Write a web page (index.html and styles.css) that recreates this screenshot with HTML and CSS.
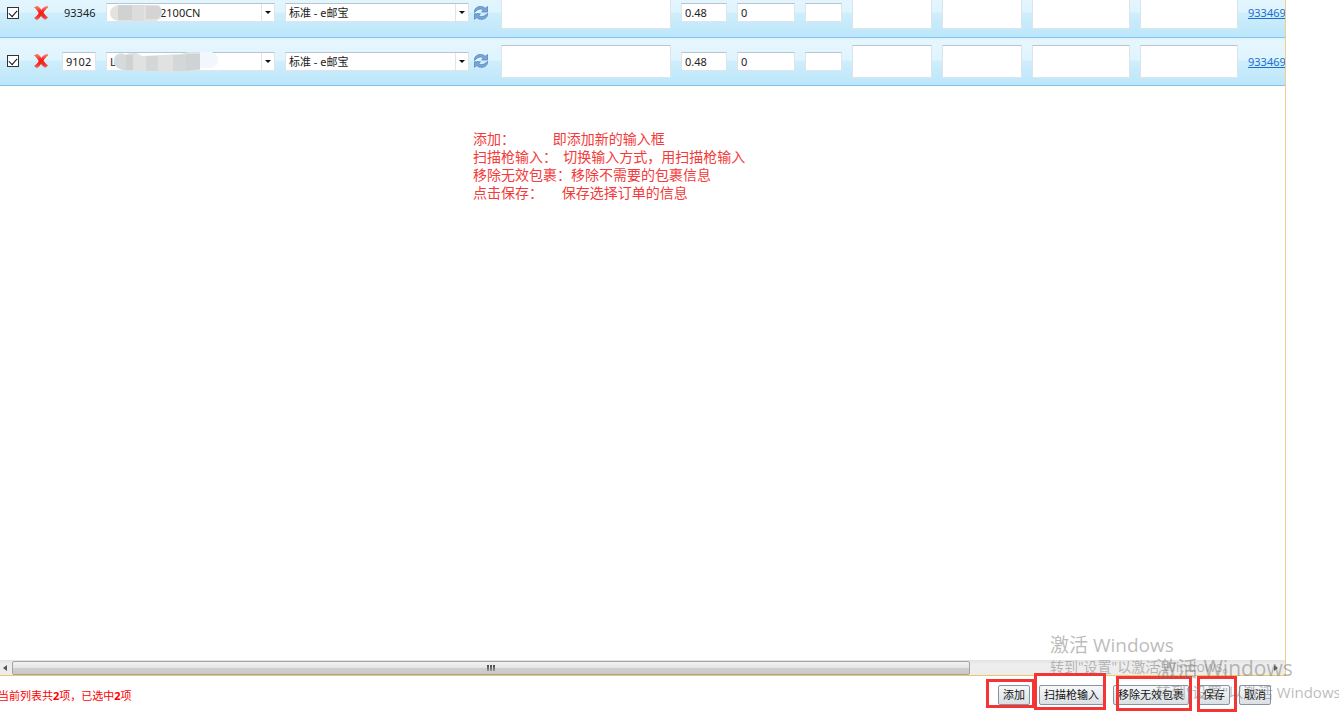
FILE: index.html
```html
<!DOCTYPE html>
<html lang="zh-CN">
<head>
<meta charset="utf-8">
<title>包裹信息</title>
<link rel="stylesheet" href="styles.css">
</head>
<body>
<svg class="defs" aria-hidden="true">
  <defs>
    <linearGradient id="red" x1="0" y1="0" x2="0" y2="1">
      <stop offset="0" stop-color="#f98a78"/><stop offset=".45" stop-color="#f51c14"/><stop offset=".75" stop-color="#f3302a"/><stop offset="1" stop-color="#ee7a74"/>
    </linearGradient>
    <symbol id="cross" viewBox="0 0 16 16">
      <path fill="url(#red)" d="M1 2.200 4.400.8C5.800 1.500 7.200 3.200 8.300 4.800 9.800 3 11.600 1.500 14.200.8L15.200 2.400C13 3.800 11.600 5.600 10.500 7.700 11.800 9.600 13.200 11 15 12.600L12.200 15C10.600 14 9.200 12.500 8 11 6.900 12.800 5.600 14.300 3.800 15.200L1 13C3.200 11.800 4.700 10 5.700 8 4.600 5.900 3 3.800 1 2.200Z"/>
    </symbol>
    <symbol id="refresh" viewBox="0 0 16 16">
      <path fill="#7ba7d8" stroke="#4a7ab8" stroke-width=".7" stroke-linejoin="round" d="M1.400 7.500C1.200 3.800 3.800 1.600 7.200 1.500 9.200 1.500 11 2 12.200 3.300L14.500 1.500V7H8.500L10.300 5.200C9.500 4.400 8.400 4 7.400 4.100 5.200 4.200 3.700 5.400 1.400 7.500Z"/>
      <path fill="#7ba7d8" stroke="#4a7ab8" stroke-width=".7" stroke-linejoin="round" d="M14.600 8.300C14.800 12 12.200 14.200 8.800 14.300 6.800 14.300 5 13.800 3.800 12.500L1.500 14.300V8.800H7.500L5.700 10.600C6.500 11.400 7.600 11.800 8.600 11.700 10.800 11.600 12.300 10.400 14.600 8.300Z"/>
    </symbol>
  </defs>
</svg>
<div class="page">
  <main class="panel">
    <div class="viewport">
      <table class="grid">
        <colgroup>
          <col class="c-check"><col class="c-del"><col class="c-id"><col class="c-track"><col class="c-ship"><col class="c-note"><col class="c-weight"><col class="c-price"><col class="c-qty"><col class="c-size"><col class="c-size"><col class="c-memo"><col class="c-memo"><col class="c-order">
        </colgroup>
        <tbody>
          <tr>
            <td><input class="check" type="checkbox" aria-label="选择" checked></td>
            <td><button class="icon" type="button" aria-label="删除"><svg viewBox="0 0 16 16"><use href="#cross"/></svg></button></td>
            <td><span class="id">93346</span></td>
            <td>
              <span class="combo">
                <select class="masked" aria-label="跟踪号"><option>2100CN</option></select>
                <svg class="mask" viewBox="0 0 120 24" aria-hidden="true">
                  <path fill="#e3e2df" d="M12 4H52Q56 6 56 12T50 20H12Q4 18 4 12T12 4Z"/>
                  <path fill="#cfd2d3" d="M12 4H26V19H12Z"/><path fill="#dcdcdc" d="M26 4H38V20H26Z"/><path fill="#d3d4d3" d="M40 5H52Q56 7 55 12T50 18H40Z"/>
                </svg>
              </span>
            </td>
            <td>
              <div class="ship">
                <span class="combo"><select aria-label="运输方式"><option>标准 - e邮宝</option></select></span>
                <button class="icon" type="button" aria-label="刷新"><svg viewBox="0 0 16 16"><use href="#refresh"/></svg></button>
              </div>
            </td>
            <td><textarea aria-label="备注"></textarea></td>
            <td><input class="field" type="text" aria-label="重量" value="0.48"></td>
            <td><input class="field" type="text" aria-label="运费" value="0"></td>
            <td><input class="field" type="text" aria-label="数量"></td>
            <td><textarea aria-label="中文名"></textarea></td>
            <td><textarea aria-label="英文名"></textarea></td>
            <td><textarea aria-label="说明"></textarea></td>
            <td><textarea aria-label="附注"></textarea></td>
            <td><a href="#">933469</a></td>
          </tr>
          <tr>
            <td><input class="check" type="checkbox" aria-label="选择" checked></td>
            <td><button class="icon" type="button" aria-label="删除"><svg viewBox="0 0 16 16"><use href="#cross"/></svg></button></td>
            <td><input class="field" type="text" aria-label="编号" value="9102"></td>
            <td>
              <span class="combo">
                <select aria-label="跟踪号"><option>L</option></select>
                <svg class="mask" viewBox="0 0 120 24" aria-hidden="true">
                  <path fill="#f1f7fc" d="M94 2H106Q113 6 112 12T102 18H94Z"/>
                  <path fill="#dfe2e1" d="M9 6Q14 1 19 5 28 0 36 6L75 4 82 2H94V20L70 22Q50 23 38 20 22 24 12 18 6 12 9 6Z"/>
                  <path fill="#d5dadc" d="M9 7Q14 2 20 5V20Q12 20 8 14Z"/><path fill="#cdd2d3" d="M20 5H27V20H20Z"/><path fill="#d3d7d8" d="M40 6H52V21H40ZM67 5H80V21H67Z"/><path fill="#cfd3d5" d="M80 4H94V19L80 21Z"/>
                </svg>
              </span>
            </td>
            <td>
              <div class="ship">
                <span class="combo"><select aria-label="运输方式"><option>标准 - e邮宝</option></select></span>
                <button class="icon" type="button" aria-label="刷新"><svg viewBox="0 0 16 16"><use href="#refresh"/></svg></button>
              </div>
            </td>
            <td><textarea aria-label="备注"></textarea></td>
            <td><input class="field" type="text" aria-label="重量" value="0.48"></td>
            <td><input class="field" type="text" aria-label="运费" value="0"></td>
            <td><input class="field" type="text" aria-label="数量"></td>
            <td><textarea aria-label="中文名"></textarea></td>
            <td><textarea aria-label="英文名"></textarea></td>
            <td><textarea aria-label="说明"></textarea></td>
            <td><textarea aria-label="附注"></textarea></td>
            <td><a href="#">933469</a></td>
          </tr>
        </tbody>
      </table>
      <div class="help">
        <p>添加：            即添加新的输入框</p>
        <p>扫描枪输入：  切换输入方式，用扫描枪输入</p>
        <p>移除无效包裹：移除不需要的包裹信息</p>
        <p>点击保存：      保存选择订单的信息</p>
      </div>
    </div>
    <div class="scrollbar">
      <svg class="arrow" viewBox="0 0 6 8"><path d="M5 1 1 4 5 7Z"/></svg>
      <div class="track"><div class="thumb"><i></i><i></i><i></i></div></div>
      <svg class="arrow" viewBox="0 0 6 8"><path d="M1 1 5 4 1 7Z"/></svg>
    </div>
  </main>
  <footer class="footer">
    <p class="status">当前列表共<b>2</b>项，已选中<b>2</b>项</p>
    <div class="actions">
      <span class="action mark-add"><button type="button">添加</button></span>
      <span class="action mark-scan"><button type="button">扫描枪输入</button></span>
      <span class="action mark-remove"><button type="button">移除无效包裹</button></span>
      <span class="action mark-save"><button type="button">保存</button></span>
      <span class="action"><button type="button">取消</button></span>
    </div>
  </footer>
  <div class="watermark first"><p class="big">激活 Windows</p><p>转到"设置"以激活 Windows。</p></div>
  <div class="watermark second"><p class="big">激活 Windows</p><p>转到"设置"以激活 Windows</p></div>
</div>
</body>
</html>
```

FILE: styles.css
```css
* { box-sizing: border-box; }

body, p { margin: 0; }

body, button, input, select, textarea {
  font-family: "Noto Sans", "Noto Sans CJK SC", sans-serif;
  font-size: 11px;
  color: #222;
}

.defs { position: absolute; width: 0; height: 0; }

.page {
  position: relative;
  display: flex;
  flex-direction: column;
  height: 100vh;
  overflow: hidden;
  background: #fff;
}

.panel {
  flex: 1;
  display: flex;
  flex-direction: column;
  min-height: 0;
  margin-right: 53px;
  border-right: 1px solid #ecd08a;
  border-bottom: 1px solid #e8c66c;
}

.viewport { flex: 1; min-height: 0; overflow: hidden; }

/* The list is scrolled down by a few pixels. */
.grid {
  width: 1400px;
  margin-top: -11px;
  table-layout: fixed;
  border-collapse: collapse;
}

.grid tr {
  height: 48px;
  background: linear-gradient(#c9e7fb 0, #e6f6fe 2px, #dff4fe 23px, #cfeefc 24px, #bbe6fb 100%);
}

.grid td {
  padding: 0 5px;
  vertical-align: middle;
  border-bottom: 1px solid #85c2f0;
}

.c-check { width: 28px; }
.c-del { width: 29px; }
.c-id { width: 44px; }
.c-track { width: 179px; }
.c-ship { width: 216px; }
.c-note { width: 180px; }
.c-weight { width: 56px; }
.c-price { width: 68px; }
.c-qty { width: 47px; }
.c-size { width: 90px; }
.c-memo { width: 108px; }

.check {
  display: block;
  appearance: none;
  width: 12px;
  height: 12px;
  margin: 0 0 0 2px;
  border: 1px solid #333;
  background: #fff;
}

.check:checked::after {
  content: "";
  display: block;
  width: 7px;
  height: 4px;
  margin: 2px 1px;
  border: solid #111;
  border-width: 0 0 1px 1px;
  transform: rotate(-48deg);
}

.icon {
  display: block;
  flex: none;
  width: 16px;
  height: 16px;
  padding: 0;
  border: 0;
  background: none;
}

.icon svg { display: block; width: 100%; height: 100%; }

.id { padding-left: 2px; }

.field, textarea, select {
  display: block;
  width: 100%;
  margin: 0;
  border: 1px solid #dde5ea;
  border-top-color: #b9c4cc;
  border-radius: 0;
  background: #fff;
  outline: 0;
}

.field { height: 19px; padding: 0 3px; }

textarea { height: 33px; padding: 2px; resize: none; }

.combo { position: relative; display: block; width: 100%; }

select { appearance: none; height: 19px; padding: 0 14px 0 3px; }

.masked { padding-left: 53px; }

.combo::before {
  content: "";
  position: absolute;
  top: 1px;
  right: 1px;
  width: 12px;
  height: 17px;
  border-left: 1px solid #e2e5e8;
}

.combo::after {
  content: "";
  position: absolute;
  top: 8px;
  right: 4px;
  border: 3px solid transparent;
  border-top-color: #111;
  border-bottom: 0;
}

.mask { position: absolute; top: -2px; left: 0; width: 120px; height: 24px; }

.ship { display: flex; align-items: center; gap: 4px; width: 204px; }

a { color: #1b6fd0; }

.help {
  padding: 43px 0 0 473px;
  font-family: "Noto Sans CJK SC", sans-serif;
  font-size: 14px;
  line-height: 18px;
  color: #f43a3a;
}

.help p { white-space: pre; }

.scrollbar {
  display: flex;
  align-items: center;
  height: 15px;
  padding: 0 6px 0 2px;
  background: linear-gradient(#e2e2e2, #eee 4px, #ececec);
}

.arrow { flex: none; width: 6px; height: 8px; fill: #555; }

.track { flex: 1; padding: 0 0 0 4px; }

.thumb {
  display: flex;
  align-items: center;
  justify-content: center;
  gap: 1px;
  width: 76%;
  height: 14px;
  border: 1px solid #a3a3a3;
  border-radius: 2px;
  background: linear-gradient(#f3f3f3, #e4e4e5 48%, #cfcfd1 52%, #c9c9cb);
}

.thumb i { width: 2px; height: 6px; background: linear-gradient(#444, #999); }

.footer {
  display: flex;
  align-items: center;
  justify-content: space-between;
  height: 40px;
  padding: 0 68px 3px 0;
}

.status { margin-left: -2px; color: #f00; white-space: nowrap; }

.actions { display: flex; gap: 9px; }

.action { position: relative; }

.action button {
  display: block;
  height: 20px;
  padding: 0 4px;
  border: 1px solid #8795a3;
  border-radius: 2px;
  background: linear-gradient(#f6f8fa, #e9edf0 50%, #dadfe3);
  line-height: 16px;
  white-space: nowrap;
  color: #111;
}

/* Red call-out frames around the buttons. */
.action[class*="mark"]::after {
  content: "";
  position: absolute;
  border: 3px solid #f53434;
  pointer-events: none;
}

.mark-add::after { inset: -6px -5px -3px -12px; }
.mark-scan::after { inset: -12px -2px -5px -5px; }
.mark-remove::after { inset: -9px -3px -6px 3px; }
.mark-save::after { inset: -9px -7px -7px -1px; }

.watermark {
  position: absolute;
  font-family: "Open Sans", "Noto Sans CJK SC", sans-serif;
  font-size: 14px;
  line-height: 18px;
  color: rgba(120, 120, 120, .5);
  white-space: nowrap;
  pointer-events: none;
}

.watermark .big { font-size: 19px; line-height: 26px; }

.first { left: 1050px; bottom: 40px; }

.second { left: 1156px; bottom: 15px; font-size: 15px; }

.second .big { font-size: 21px; line-height: 30px; }
```
